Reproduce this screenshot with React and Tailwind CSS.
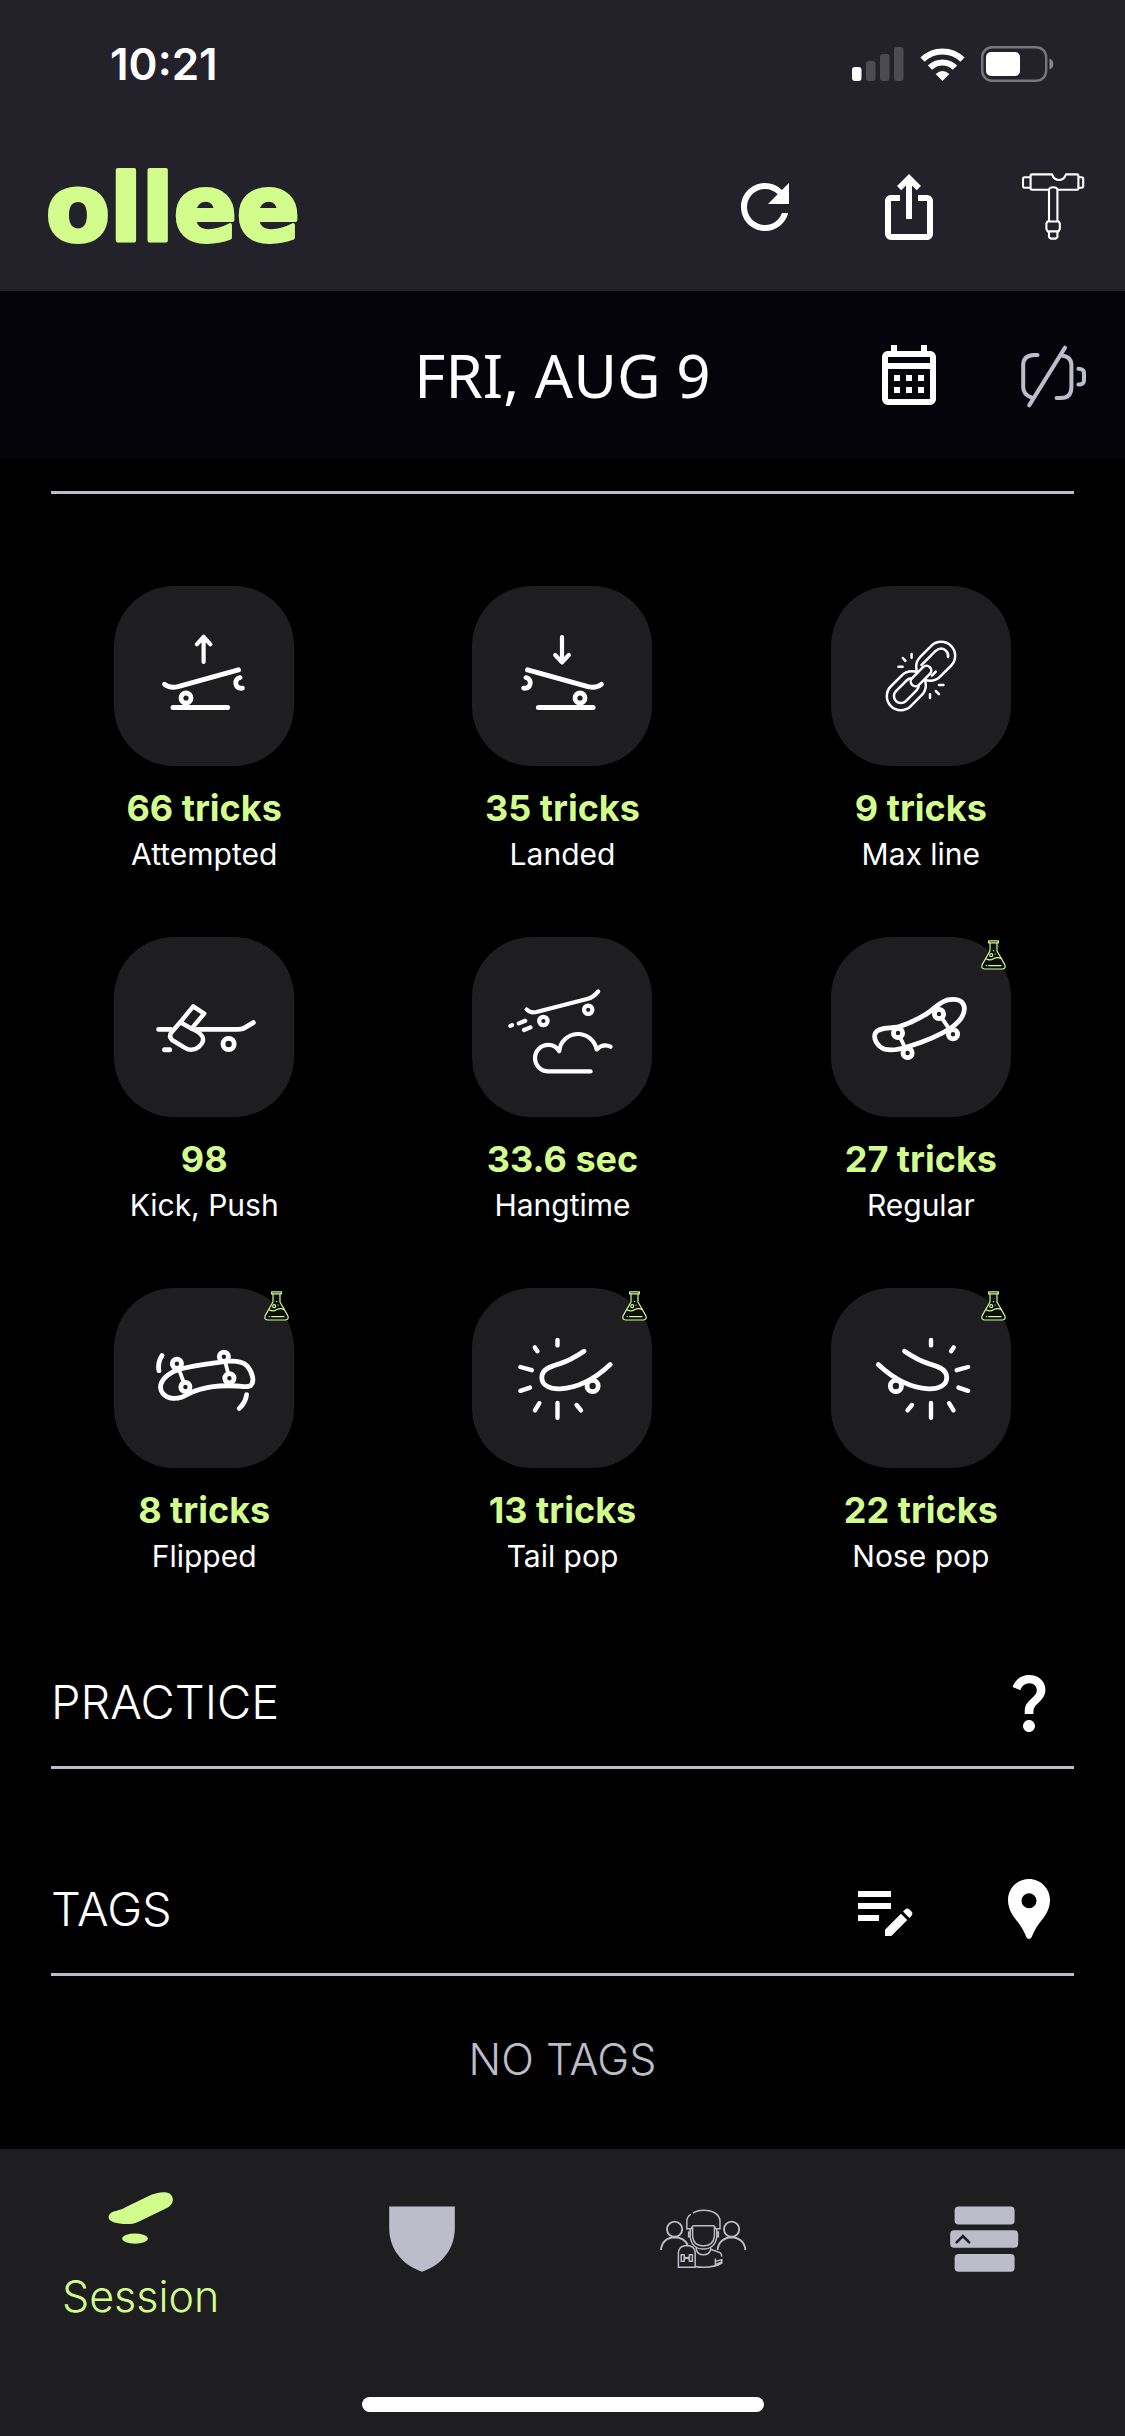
import React from "react";
import {
  MdRefresh,
  MdIosShare,
  MdOutlineCalendarMonth,
  MdQuestionMark,
  MdEditNote,
  MdLocationPin,
} from "react-icons/md";

function Signal() {
  return (
    <svg className="h-9 w-[52px]" viewBox="0 0 52 36" aria-hidden="true">
      <rect x="0" y="21" width="9.5" height="14" rx="3" fill="#fff" />
      <rect x="14" y="15" width="9.5" height="20" rx="3" fill="#4c4b52" />
      <rect x="28" y="8" width="9.5" height="27" rx="3" fill="#4c4b52" />
      <rect x="42" y="1" width="9.5" height="34" rx="3" fill="#4c4b52" />
    </svg>
  );
}

function Wifi() {
  return (
    <svg className="h-9 w-[45px]" viewBox="0 0 46 36" aria-hidden="true">
      <g fill="none" stroke="#fff" strokeWidth="6.2">
        <path d="M2.6 13.6 A29 29 0 0 1 43.4 13.6" />
        <path d="M10.2 21.8 A18 18 0 0 1 35.8 21.8" />
      </g>
      <path d="M23 35.5 L16 28.2 Q23 22 30 28.2 Z" fill="#fff" />
    </svg>
  );
}

function Battery() {
  return (
    <svg className="h-9 w-[73px]" viewBox="0 0 73 36" aria-hidden="true">
      <rect x="1.2" y="1.2" width="64" height="33.6" rx="10" fill="none" stroke="#78777d" strokeWidth="2.4" />
      <rect x="5" y="6" width="34" height="24" rx="5" fill="#fff" />
      <path d="M68.5 12.5 Q72.3 14 72.3 18 Q72.3 22 68.5 23.5 Z" fill="#8a898f" />
    </svg>
  );
}

function Logo() {
  return (
    <svg className="h-28 w-[270px]" viewBox="0 0 270 112" role="img" aria-label="ollee">
      <text
        x="2"
        y="90"
        fontFamily="'DejaVu Sans', sans-serif"
        fontWeight="700"
        fontSize="93"
        fill="#d2fd8c"
        stroke="#d2fd8c"
        strokeWidth="4"
        strokeLinejoin="round"
      >
        ollee
      </text>
    </svg>
  );
}

function SkateTool() {
  return (
    <svg className="size-[72px]" viewBox="0 0 72 72" fill="none" stroke="#fff" strokeWidth="2.1" strokeLinejoin="round" aria-hidden="true">
      <path d="M13.6 6.2 H7.6 Q6 6.2 6 8 V15 Q6 16.7 7.6 16.7 H13.6" />
      <path d="M32 18.8 H15 Q13.6 18.8 13.6 17.4 V4.8 Q13.6 3.4 15 3.4 H35 Q37 9 42 9 Q47 9 49 3.4 H60 Q61.4 3.4 61.4 4.8 V17.4 Q61.4 18.8 60 18.8 H40.4" />
      <path d="M61.4 6.2 H64.6 Q66.2 6.2 66.2 8 V15 Q66.2 16.7 64.6 16.7 H61.4" />
      <path d="M32 50.5 V19 Q32 16.2 36.2 16.2 Q40.4 16.2 40.4 19 V50.5" />
      <path d="M30.4 50.5 H41.8 L42.8 52.5 V58 L41.4 60.4 H30.8 L29.4 58 V52.5 Z" />
      <path d="M32 60.4 V66 L33.6 67.6 H38.8 L40.4 66 V60.4" />
    </svg>
  );
}

function BatteryOff() {
  return (
    <svg className="size-[72px]" viewBox="0 0 72 72" fill="none" stroke="#bdbcca" strokeWidth="4" strokeLinecap="round" strokeLinejoin="round" aria-hidden="true">
      <path d="M20.5 16 H17 Q6.2 16.5 6.2 26 V48 Q6.2 55.5 14.4 58.5" />
      <path d="M48 8.6 L12.2 66.4" />
      <path d="M44.6 16.4 Q54.4 17.5 54.4 26 V48 Q54.4 59 44 59 H39.6" />
      <path d="M61.4 29.8 Q67 30 67 34 V41.5 Q67 45.6 61.4 45.6" />
    </svg>
  );
}

function TileIcon({ children, width = 4.8 }) {
  return (
    <svg className="size-[180px]" viewBox="0 0 180 180" fill="none" stroke="#fff" strokeWidth={width} strokeLinecap="round" strokeLinejoin="round" aria-hidden="true">
      {children}
    </svg>
  );
}

function RampBoard() {
  return (
    <>
      <path d="M50.6 98.4 Q56 102.6 64 100.6 L124.4 83.8" strokeWidth="5" />
      <circle cx="72" cy="112" r="5" />
      <path d="M59 121.4 H113.6" strokeWidth="5" />
      <path d="M126 91.6 Q121.4 93.2 121.8 97.6 Q122.6 102.6 128.4 102.2" />
    </>
  );
}

function Attempted() {
  return (
    <TileIcon>
      <path d="M89.6 76 V51.5 M82.8 58.3 L89.6 50.8 L96.4 58.3" strokeWidth="4.2" />
      <RampBoard />
    </TileIcon>
  );
}

function Landed() {
  return (
    <TileIcon>
      <path d="M90 51 V75.5 M83.2 69 L90 76.4 L96.8 69" strokeWidth="4.2" />
      <g transform="matrix(-1 0 0 1 180 0)">
        <RampBoard />
      </g>
    </TileIcon>
  );
}

function MaxLine() {
  return (
    <TileIcon width="2.5">
      <g transform="rotate(-45 90 90)">
        <rect x="89" y="76" width="43.5" height="28" rx="14" />
        <path d="M98 97.4 H103.5 M98 82.6 H118 Q125.6 83.4 125.6 90 Q125.4 93.8 122.6 95.6" />
        <rect x="47.5" y="76" width="43.5" height="28" rx="14" />
        <rect x="54.6" y="83" width="29.4" height="14" rx="7" />
        <rect x="77.5" y="85.2" width="25" height="9.6" rx="4.8" fill="#1e1e20" />
      </g>
      <path d="M67.4 80.7 H71.6 M71.8 72 L74.4 74.8 M80.6 68 V71.8 M108 99 H112.4 M104.8 105 L108 108.2 M99 108.2 V112" />
    </TileIcon>
  );
}

function KickPush() {
  return (
    <TileIcon>
      <path d="M44.6 92.4 H56.6 M82.5 92.4 H124 Q129 92.4 132.6 89.6 L139.4 85.6" />
      <circle cx="114.6" cy="107" r="5.6" />
      <path d="M66.2 85.3 L79.2 69.4 L90.2 76.6 L77.6 91.6" strokeWidth="4.4" />
      <path d="M66.2 85.3 L57 96 Q54.6 99.6 58 103 L70.6 110.6 Q78 115.4 84.6 110 Q92.6 103 86.4 97 Q84.5 95 77.6 91.6 Z" strokeWidth="4.4" />
      <path d="M50.6 112.7 H55.6" strokeWidth="5" />
    </TileIcon>
  );
}

function Hangtime() {
  return (
    <TileIcon width="4.2">
      <path d="M54.6 72.4 Q58.4 76.4 64.4 75 L115 62 Q121.6 60.4 126.2 54.4" />
      <circle cx="71.4" cy="84" r="4.2" />
      <circle cx="116.2" cy="72.8" r="4.2" />
      <path d="M38.4 88.9 L40 88.2 M46.8 86.4 L53.2 83.8 M52 93 L58.4 90.4" />
      <path d="M118.6 134.4 H76.3 A13.3 13.3 0 0 1 76.3 107.8 Q83.4 107.8 87.2 114.2 A18.9 18.9 0 0 1 124.6 112.4 Q131 106 138.6 109.7" />
    </TileIcon>
  );
}

function Regular() {
  return (
    <TileIcon>
      <path d="M66 90.2 C57 91.6 47 90.6 44.4 96 C41.6 102 47 109.6 53 112 C60 114 68 112.6 76 110 C92 105 108 98.6 119.3 91.4 C129 84.6 134.4 77 133.2 69.6 C131.6 62.6 124 61.4 115.6 63.2 C107 66 104 71.6 96 76.6 C88 81.6 78 87 66 90.2 Z" />
      <path d="M67 96 L76.6 116 M108 77 L122 97.3" strokeWidth="4" />
      <circle cx="67" cy="96" r="4.6" fill="#1e1e20" />
      <circle cx="76.6" cy="116" r="4.6" fill="#1e1e20" />
      <circle cx="108" cy="77" r="4.6" fill="#1e1e20" />
      <circle cx="122" cy="97.3" r="4.6" fill="#1e1e20" />
    </TileIcon>
  );
}

function Flipped() {
  return (
    <TileIcon>
      <path d="M66.2 81 C80 77.4 92 76 104.7 74.3 C116 72.4 127 72 132.6 77.4 C138 83 141 93 137 97.2 C134 100 128 98.2 123.2 98 C112 97.4 106 97.6 97.3 98.8 C88 100.4 83 101.6 77 104.6 C70 108.4 67 110.6 59 110.4 C50 109.6 45 103 47 96 C49.6 88.4 57 84 66.2 81 Z" />
      <path d="M62.9 75.7 L71.4 99 M109.9 68.7 L115.4 90.3" strokeWidth="3.8" />
      <circle cx="62.9" cy="75.7" r="4.6" fill="#1e1e20" />
      <circle cx="109.9" cy="68.7" r="4.6" fill="#1e1e20" />
      <circle cx="71.4" cy="99" r="4.6" fill="#1e1e20" />
      <circle cx="115.4" cy="90.3" r="4.6" fill="#1e1e20" />
      <path d="M48 67.6 Q43.4 74.4 44.9 82.6 M132.6 106.6 Q131.6 114.4 125.2 120.4" />
    </TileIcon>
  );
}

function PopBoard() {
  return (
    <>
      <path d="M112 63.2 C104 68.6 96 73 88 75.6 C78 78.6 69.8 81.4 69.8 89.4 C69.8 97.4 78 101.2 88 100.8 C108 100 124 90 138.2 76.6" />
      <circle cx="120.6" cy="98" r="5.6" />
      <path d="M85.5 52 V57.4 M62.8 59.4 L65.4 63.2 M48.4 79 L59.8 82.2 M48.4 102.8 L58 99.6 M67.4 115.2 L63 122.4 M85.5 115 V129.8 M104.6 117 L109 122.4" strokeWidth="4.4" />
    </>
  );
}

function TailPop() {
  return (
    <TileIcon>
      <PopBoard />
    </TileIcon>
  );
}

function NosePop() {
  return (
    <TileIcon>
      <g transform="matrix(-1 0 0 1 185.5 0)">
        <PopBoard />
      </g>
    </TileIcon>
  );
}

function Flask() {
  return (
    <svg className="absolute top-[3px] right-[5px] h-[30px] w-[25px]" viewBox="0 0 25 30" role="img" aria-label="Experimental">
      <path d="M9 3 V11 L1 25 Q0 29 3.5 29 H21.5 Q25 29 24 25 L16 11 V3 Z" fill="#0d0d0e" />
      <g fill="none" stroke="#d2fd8c" strokeWidth="1.2" strokeLinejoin="round" strokeLinecap="round">
        <path d="M7.6 0.8 H17.4 V2.8 H7.6 Z" />
        <path d="M9 3 V11 L1.2 24.6 Q-0.2 28.8 3.5 29 H21.5 Q25.2 28.8 23.8 24.6 L16 11 V3" />
        <path d="M5 18.8 Q9 21 12.5 18.8 Q16.5 16.6 20 18.4" />
        <circle cx="10.2" cy="15.2" r="1.5" />
        <path d="M7.6 25.6 H20 M5.2 25.6 H5.4 M14 14 H14.2 M12.4 10.6 H12.6" />
      </g>
    </svg>
  );
}

function BoardTab() {
  return (
    <svg className="h-14 w-[72px]" viewBox="0 0 72 56" fill="#d2fd8c" aria-hidden="true">
      <path d="M3.6 27.3 C3.6 23.6 7 21.8 11 21 C14 20.2 16 19.6 18.2 18.6 C28 13.6 38 8.6 47 4.6 C53 2.2 60 1.2 64.6 3.6 C69.4 7.2 69 14 62.9 17.6 L34 31.4 C28 34.4 22 34.4 16 33.8 C8 33 3.6 30.4 3.6 27.3 Z" />
      <ellipse cx="30" cy="48.6" rx="12.8" ry="5.1" />
    </svg>
  );
}

function ShieldTab() {
  return (
    <svg className="size-[66px]" viewBox="0 0 66 66" fill="#bdbcca" aria-hidden="true">
      <path d="M0.2 0.4 H65.8 V22 C65.8 42 54 58.4 33 65.8 C12 58.4 0.2 42 0.2 22 Z" />
    </svg>
  );
}

function CrewTab() {
  return (
    <svg className="h-[66px] w-[94px]" viewBox="0 0 94 66" fill="none" stroke="#bdbcca" strokeWidth="1.5" aria-hidden="true">
      <g strokeWidth="1.9">
        <circle cx="18.6" cy="23.2" r="7.6" />
        <circle cx="75.6" cy="23.2" r="7.6" />
        <path d="M5 44 C5.4 36 11 31.4 18.6 31.2 C24.6 31.4 29.6 34.2 31.8 39" />
        <path d="M61.6 44 C62 36 68 31.4 75.6 31.2 C83 31.4 89 36 89.4 44" />
      </g>
      <path d="M37 7.2 C40 5 43.6 4.3 47.4 4.3 C57 4.3 64 8.4 64 15.6 V22.8 H59.4 Q59 19.8 57 19.8 H38 Q36 19.8 35.6 22.8 H30.8 V15.6 C30.8 12.6 32.4 10 34.8 8.4" />
      <path d="M36.6 21.6 V30.4 Q37.4 39.8 47.4 39.9 Q57.4 39.8 58.4 30.4 V21.6" />
      <path d="M34.2 23 V31 Q36 43 47.4 43 Q58.8 43 60.8 31 V23 M34 26 H32.6 V30.8 H34.2 M60.8 26 H62.4 V30.8 H60.8" />
      <path d="M40.4 41.6 V44 Q42 48.8 47.4 48.8 Q53 48.8 54.6 44 V41.6 M54.6 43.2 L64 46.6 Q65.6 47.8 65.8 50.6 M65.8 53 V57 Q59 61.2 47.4 61.3 Q43 61.2 39.4 60.4 M59.4 52.4 V59 M59.4 55.4 L65.8 53.6 M59.4 58.6 L65.6 56" />
      <path d="M39.2 61.2 H22.4 V46.4 Q23 39.6 30.8 39.4 Q38.6 39.6 39.2 46.4 Z M25.2 48.8 H28.2 V55.2 H25.2 Z M33.4 48.8 H36.4 V55.2 H33.4 Z M28.2 51 L33.4 53 M28.2 53 L33.4 51" />
    </svg>
  );
}

function FeedTab() {
  return (
    <svg className="h-[70px] w-[72px]" viewBox="0 0 72 70" fill="#bdbcca" aria-hidden="true">
      <rect x="6.6" y="2.4" width="60" height="18" rx="4" />
      <rect x="2.2" y="26.2" width="68" height="17.6" rx="4" />
      <rect x="6.6" y="50" width="60" height="17.8" rx="4" />
      <path d="M8.6 38.4 L14.9 32 L21.2 38.4" fill="none" stroke="#1e1e20" strokeWidth="2.6" strokeLinecap="round" />
    </svg>
  );
}

const stats = [
  { value: "66 tricks", label: "Attempted", Icon: Attempted },
  { value: "35 tricks", label: "Landed", Icon: Landed },
  { value: "9 tricks", label: "Max line", Icon: MaxLine },
  { value: "98", label: "Kick, Push", Icon: KickPush },
  { value: "33.6 sec", label: "Hangtime", Icon: Hangtime },
  { value: "27 tricks", label: "Regular", Icon: Regular, beta: true },
  { value: "8 tricks", label: "Flipped", Icon: Flipped, beta: true },
  { value: "13 tricks", label: "Tail pop", Icon: TailPop, beta: true },
  { value: "22 tricks", label: "Nose pop", Icon: NosePop, beta: true },
];

const otherTabs = [
  { name: "Badges", Icon: ShieldTab },
  { name: "Crew", Icon: CrewTab },
  { name: "Feed", Icon: FeedTab },
];

function Stat({ value, label, Icon, beta }) {
  return (
    <li className="flex flex-col items-center">
      <button type="button" aria-label={label} className="relative rounded-[60px] bg-[#1e1e20]">
        <Icon />
        {beta && <Flask />}
      </button>
      <p className="mt-[18px] text-[36px] leading-[48px] font-bold text-[#d2fd8c]">{value}</p>
      <p className="mt-0.5 text-[30px] leading-10">{label}</p>
    </li>
  );
}

function Section({ title, children }) {
  return (
    <div className="mx-[51px] flex items-center justify-between border-b-[3px] border-[#bdbcca] pr-[9px] pb-7">
      <h2 className="text-[47px] leading-[72px] font-light">{title}</h2>
      <div className="flex gap-[72px]">{children}</div>
    </div>
  );
}

export default function App() {
  return (
    <div className="flex min-h-screen flex-col bg-black font-['Inter',sans-serif] text-white">
      <header className="bg-[#23222a]">
        <div className="flex h-32 items-center justify-between pr-[71px] pl-[110px]">
          <time className="text-[44px] leading-[56px] font-semibold">10:21</time>
          <div className="flex items-center gap-4">
            <Signal />
            <Wifi />
            <Battery />
          </div>
        </div>
        <div className="flex items-center justify-between pt-[23px] pr-9 pb-7 pl-11">
          <h1>
            <Logo />
          </h1>
          <div className="flex gap-[72px]">
            <button type="button" aria-label="Refresh">
              <MdRefresh className="size-[72px]" />
            </button>
            <button type="button" aria-label="Share">
              <MdIosShare className="size-[72px]" />
            </button>
            <button type="button" aria-label="Settings">
              <SkateTool />
            </button>
          </div>
        </div>
      </header>

      <div className="grid grid-cols-[1fr_auto_1fr] items-center bg-[#05040a] px-9 py-12">
        <span />
        <p className="font-['Noto_Sans',sans-serif] text-[60px] leading-[72px]">FRI, AUG 9</p>
        <div className="flex justify-end gap-[72px]">
          <button type="button" aria-label="Pick a date">
            <MdOutlineCalendarMonth className="size-[72px]" />
          </button>
          <button type="button" aria-label="Tracker disconnected">
            <BatteryOff />
          </button>
        </div>
      </div>

      <main className="flex-1 pt-8 pb-[58px]">
        <hr className="mx-[51px] border-t-[3px] border-[#bdbcca]" />
        <ul className="mt-[92px] grid grid-cols-3 gap-y-[63px] px-[25px]">
          {stats.map((s) => (
            <Stat key={s.label} {...s} />
          ))}
        </ul>

        <section className="mt-[90px]">
          <Section title="PRACTICE">
            <button type="button" aria-label="About practice">
              <MdQuestionMark className="size-[72px]" />
            </button>
          </Section>
        </section>

        <section className="mt-[104px]">
          <Section title="TAGS">
            <button type="button" aria-label="Edit tags">
              <MdEditNote className="size-[72px]" />
            </button>
            <button type="button" aria-label="Add location">
              <MdLocationPin className="size-[72px]" />
            </button>
          </Section>
          <p className="mt-[51px] text-center text-[43px] leading-[64px] font-light text-[#bdbcca]">NO TAGS</p>
        </section>
      </main>

      <footer className="bg-[#1e1e20] pt-[41px] pb-6">
        <nav className="grid grid-cols-4 items-start">
          <a href="#session" aria-current="page" className="flex flex-col items-center text-[#d2fd8c]">
            <BoardTab />
            <span className="mt-[22px] text-[43px] leading-[56px] font-light">Session</span>
          </a>
          {otherTabs.map(({ name, Icon }) => (
            <a key={name} href={"#" + name.toLowerCase()} aria-label={name} className="flex h-[98px] items-center justify-center">
              <Icon />
            </a>
          ))}
        </nav>
        <div className="mx-auto mt-[73px] h-[15px] w-[402px] rounded-full bg-white" />
      </footer>
    </div>
  );
}
